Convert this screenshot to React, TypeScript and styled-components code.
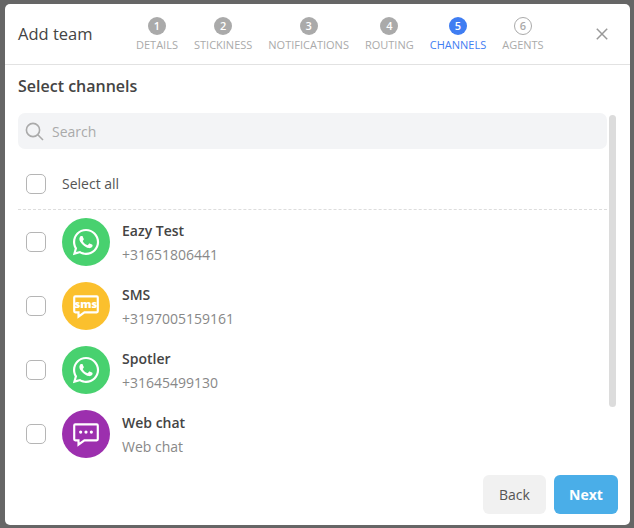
import React from "react";
import styled, { createGlobalStyle } from "styled-components";
import { FaWhatsapp } from "react-icons/fa";

const Global = createGlobalStyle`
  html, body { margin: 0; padding: 0; height: 100%; background: #666; overflow: hidden; }
  #root { height: 100%; }
  * { box-sizing: border-box; }
`;

const Page = styled.div`
  width: 634px;
  height: 528px;
  padding: 4px 4px 3px 5px;
  font-family: "Open Sans", "Liberation Sans", sans-serif;
`;

const Dialog = styled.div`
  position: relative;
  width: 625px;
  height: 521px;
  background: #fff;
  border-radius: 5px;
  display: flex;
  flex-direction: column;
  overflow: hidden;
`;

const Header = styled.header`
  height: 61px;
  flex: none;
  border-bottom: 1px solid #e2e2e2;
  display: flex;
  align-items: center;
  padding-left: 13px;
`;

const Title = styled.h1`
  margin: 0;
  width: 118px;
  font-size: 16.5px;
  font-weight: 400;
  color: #444;
  line-height: 22px;
`;

const Steps = styled.ol`
  list-style: none;
  margin: 0;
  padding: 0;
  display: flex;
  gap: 16px;
`;

const Step = styled.li<{ $active?: boolean }>`
  display: flex;
  flex-direction: column;
  align-items: center;
  gap: 3px;
  font-size: 11px;
  line-height: 14px;
  color: ${(p) => (p.$active ? "#3f7df2" : "#aaa")};
`;

const StepNo = styled.span<{ $state: "done" | "active" | "todo" }>`
  width: 18px;
  height: 18px;
  border-radius: 50%;
  display: flex;
  align-items: center;
  justify-content: center;
  font-size: 11px;
  font-weight: 600;
  line-height: 1;
  color: ${(p) => (p.$state === "todo" ? "#aaa" : "#fff")};
  background: ${(p) => (p.$state === "done" ? "#aaa" : p.$state === "active" ? "#3f7df2" : "#fff")};
  border: ${(p) => (p.$state === "todo" ? "1px solid #aaa" : "none")};
`;

const Close = styled.button`
  margin-left: auto;
  margin-right: 22px;
  padding: 0;
  width: 12px;
  height: 12px;
  border: none;
  background: none;
  display: flex;
`;

const Body = styled.main`
  flex: 1;
  min-height: 0;
  overflow: hidden;
  padding: 0 23px 0 13px;
`;

const Heading = styled.h2`
  margin: 0;
  padding-top: 9px;
  height: 48px;
  font-size: 16px;
  font-weight: 600;
  line-height: 24px;
  color: #444;
`;

const Search = styled.div`
  height: 36px;
  background: #f3f4f6;
  border-radius: 7px;
  display: flex;
  align-items: center;
  gap: 8px;
  padding-left: 7px;
  font-size: 14px;
  color: #aaa;
`;

const SelectAll = styled.label`
  height: 61px;
  display: flex;
  align-items: center;
  gap: 16px;
  padding: 9px 0 0 8px;
  border-bottom: 1px dashed #ddd;
  font-size: 14px;
  color: #555;
`;

const Box = styled.span`
  flex: none;
  width: 20px;
  height: 20px;
  border: 1px solid #b5b5b5;
  border-radius: 5px;
  background: #fff;
`;

const List = styled.ul`
  list-style: none;
  margin: 0;
  padding: 8px 0 0 8px;
  display: flex;
  flex-direction: column;
  gap: 16px;
`;

const Row = styled.li`
  display: flex;
  align-items: center;
  gap: 16px;
`;

const Avatar = styled.span<{ $bg: string }>`
  flex: none;
  width: 48px;
  height: 48px;
  border-radius: 50%;
  background: ${(p) => p.$bg};
  color: #fff;
  display: flex;
  align-items: center;
  justify-content: center;
`;

const Info = styled.div`
  margin-left: -4px;
  margin-top: 2px;
  display: flex;
  flex-direction: column;
  gap: 4px;
`;

const Name = styled.div`
  font-size: 14px;
  font-weight: 600;
  line-height: 20px;
  color: #444;
`;

const Sub = styled.div`
  font-size: 14px;
  line-height: 20px;
  color: #888;
`;

const Scrollbar = styled.div`
  position: absolute;
  left: 604px;
  top: 111px;
  width: 7px;
  height: 292px;
  border-radius: 4px;
  background: #dcdcdc;
`;

const Footer = styled.footer`
  flex: none;
  height: 60px;
  display: flex;
  justify-content: flex-end;
  gap: 8px;
  padding: 10px 12px 0 0;
`;

const Button = styled.button<{ $primary?: boolean }>`
  height: 39px;
  width: ${(p) => (p.$primary ? "64px" : "63px")};
  border: none;
  border-radius: 6px;
  font-family: inherit;
  font-size: 14px;
  font-weight: ${(p) => (p.$primary ? 700 : 400)};
  color: ${(p) => (p.$primary ? "#fff" : "#555")};
  background: ${(p) => (p.$primary ? "#4aaee8" : "#f1f1f1")};
`;

const bubble = "M4 5h20a1 1 0 0 1 1 1v13a1 1 0 0 1-1 1H12.5l-5.5 4v-4H4a1 1 0 0 1-1-1V6a1 1 0 0 1 1-1z";

const SmsIcon = () => (
  <svg width="30" height="30" viewBox="0 0 28 28" fill="none">
    <path d={bubble} stroke="#fff" strokeWidth="2" />
    <text x="14" y="16" textAnchor="middle" fontFamily="'Open Sans', sans-serif" fontWeight="800" fontSize="10.5" fill="#fff">sms</text>
  </svg>
);

const ChatIcon = () => (
  <svg width="30" height="30" viewBox="0 0 28 28" fill="none">
    <path d={bubble} stroke="#fff" strokeWidth="2" />
    <circle cx="9" cy="12.2" r="1.5" fill="#fff" />
    <circle cx="14" cy="12.2" r="1.5" fill="#fff" />
    <circle cx="19" cy="12.2" r="1.5" fill="#fff" />
  </svg>
);

const steps = ["DETAILS", "STICKINESS", "NOTIFICATIONS", "ROUTING", "CHANNELS", "AGENTS"];
const channels = [
  { name: "Eazy Test", sub: "+31651806441", bg: "#48d16f", icon: <FaWhatsapp size={30} /> },
  { name: "SMS", sub: "+3197005159161", bg: "#fbc02d", icon: <SmsIcon /> },
  { name: "Spotler", sub: "+31645499130", bg: "#48d16f", icon: <FaWhatsapp size={30} /> },
  { name: "Web chat", sub: "Web chat", bg: "#9c2fae", icon: <ChatIcon /> },
];

export default function App() {
  return (
    <Page>
      <Global />
      <Dialog>
        <Header>
          <Title>Add team</Title>
          <Steps>
            {steps.map((s, i) => (
              <Step key={s} $active={i === 4}>
                <StepNo $state={i < 4 ? "done" : i === 4 ? "active" : "todo"}>{i + 1}</StepNo>
                {s}
              </Step>
            ))}
          </Steps>
          <Close aria-label="Close">
            <svg width="12" height="12" viewBox="0 0 12 12" stroke="#999" strokeWidth="1.5">
              <path d="M0.8 0.8l10.4 10.4M11.2 0.8L0.8 11.2" />
            </svg>
          </Close>
        </Header>
        <Body>
          <Heading>Select channels</Heading>
          <Search>
            <svg width="19" height="19" viewBox="0 0 19 19" fill="none" stroke="#aaa" strokeWidth="1.6">
              <circle cx="8" cy="8" r="6.6" />
              <path d="M12.8 12.8l5.2 5.2" />
            </svg>
            Search
          </Search>
          <SelectAll>
            <Box />
            Select all
          </SelectAll>
          <List>
            {channels.map((c) => (
              <Row key={c.name}>
                <Box />
                <Avatar $bg={c.bg}>{c.icon}</Avatar>
                <Info>
                  <Name>{c.name}</Name>
                  <Sub>{c.sub}</Sub>
                </Info>
              </Row>
            ))}
          </List>
        </Body>
        <Scrollbar />
        <Footer>
          <Button>Back</Button>
          <Button $primary>Next</Button>
        </Footer>
      </Dialog>
    </Page>
  );
}
